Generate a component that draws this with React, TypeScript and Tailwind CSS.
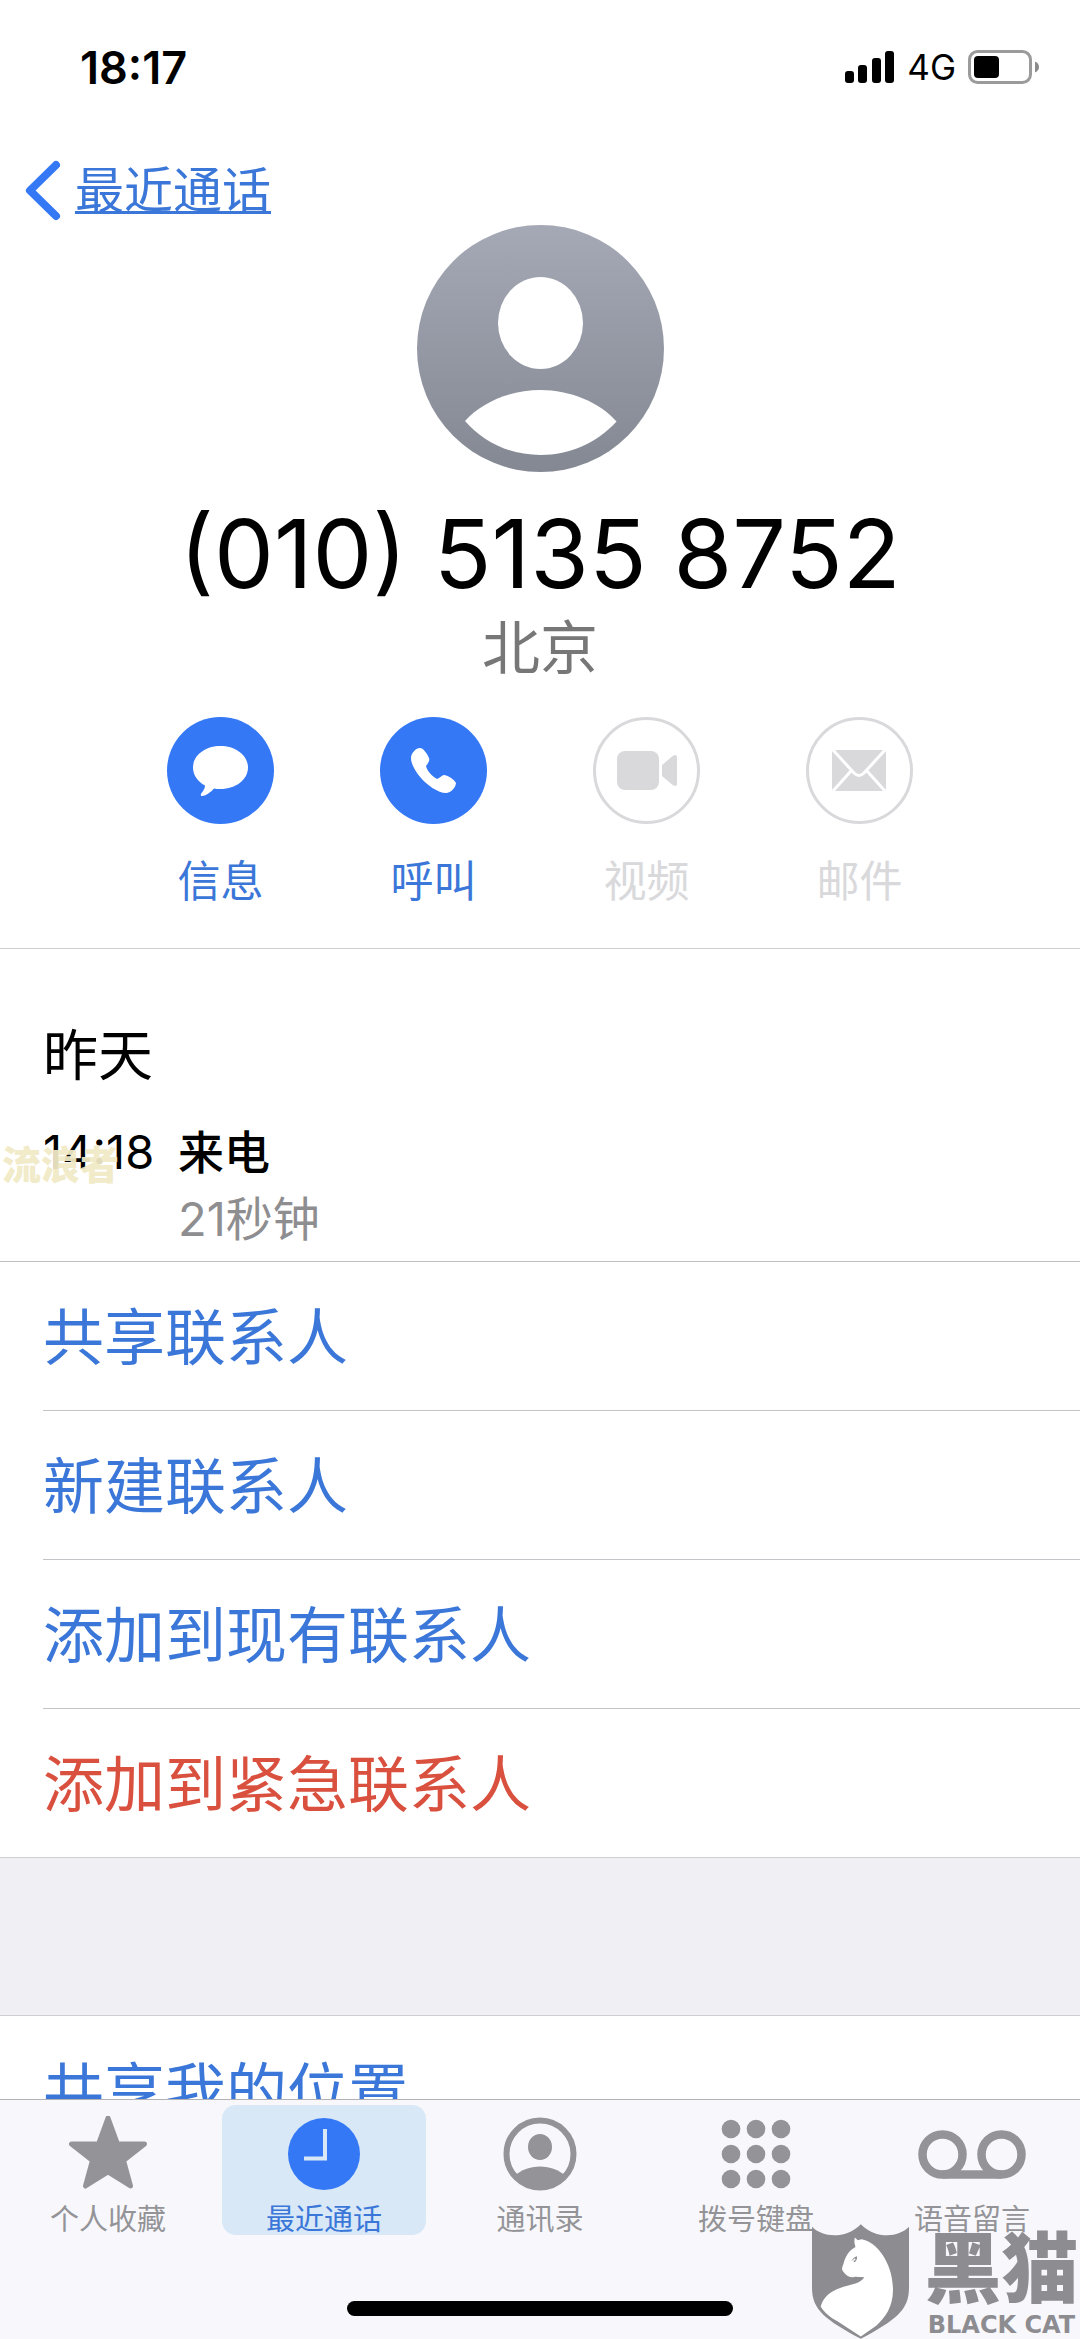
import type { ReactNode } from "react";

const SANS = "font-['Inter','Noto_Sans_CJK_SC',sans-serif]";

/* ── Status bar ── */

function StatusBar() {
  return (
    <header className="flex h-[134px] shrink-0 items-center justify-between pl-20 pr-10">
      <span className="text-[45px] font-semibold leading-none">18:17</span>
      <div className="flex items-center gap-3">
        <svg aria-hidden width="50" height="32" viewBox="0 0 50 32">
          <rect x="0" y="20" width="9" height="12" rx="3" />
          <rect x="13" y="14" width="9" height="18" rx="3" />
          <rect x="27" y="7" width="9" height="25" rx="3" />
          <rect x="40" y="0" width="9" height="32" rx="3" />
        </svg>
        <span className="text-[35px] leading-none">4G</span>
        <svg aria-hidden width="72" height="34" viewBox="0 0 72 34">
          <rect x="1.5" y="1.5" width="61" height="31" rx="8" fill="none" stroke="#9b9b9b" strokeWidth="3" />
          <rect x="6" y="6" width="25" height="22" rx="4" />
          <path d="M67 11.5c2.6 1 4 3.2 4 5.500s-1.4 4.5-4 5.500z" fill="#8a8a8a" />
        </svg>
      </div>
    </header>
  );
}

/* ── Contact card ── */

function Avatar() {
  return (
    <svg aria-hidden className="mt-1" width="247" height="247" viewBox="0 0 247 247">
      <defs>
        <linearGradient id="avatar" x1="0" y1="0" x2="0" y2="1">
          <stop offset="0" stopColor="#a5a9b5" />
          <stop offset="1" stopColor="#848893" />
        </linearGradient>
      </defs>
      <circle cx="123.5" cy="123.5" r="123.5" fill="url(#avatar)" />
      <ellipse cx="123.5" cy="98" rx="42.5" ry="46" fill="#fff" />
      <path d="M48 196C65 177 94 165 123.5 165S182 177 199.5 196.5C180 218 153 230 123.5 230S67 218 48 196Z" fill="#fff" />
    </svg>
  );
}

function Action({ label, disabled = false, children }: { label: string; disabled?: boolean; children: ReactNode }) {
  return (
    <button
      type="button"
      disabled={disabled}
      className={`flex w-[107px] flex-col items-center gap-8 ${disabled ? "text-[#d9d9dc]" : "text-[#3478f6]"}`}
    >
      <svg aria-hidden width="107" height="107" viewBox="0 0 107 107">
        {disabled ? (
          <circle cx="53.5" cy="53.5" r="52" fill="none" stroke="currentColor" strokeWidth="3" />
        ) : (
          <circle cx="53.5" cy="53.5" r="53.5" fill="currentColor" />
        )}
        {children}
      </svg>
      <span className={`text-[43px] leading-[50px] ${disabled ? "" : "text-[#3b77d8]"}`}>{label}</span>
    </button>
  );
}

function ContactCard() {
  return (
    <section className="flex flex-col items-center border-b border-[#cfcfd2] pb-[42px]">
      <Avatar />
      <h1 className="mt-[26px] whitespace-nowrap text-[95px] leading-[112px]">(010) 5135 8752</h1>
      <p className="mt-1 text-[58px] leading-[68px] text-[#777]">北京</p>
      <div className="mt-[35px] flex gap-[106px]">
        <Action label="信息">
          <path
            d="M53.5 29C69 29 81 38.5 81 50.5S69 72 53.5 72C51 72 49 71.8 47 71.4C44 75 39 78.5 35 79C33.5 79 33.5 77.5 34.5 76C36.5 73.5 38 71 38 68.5C30.5 64.5 26 58 26 50.5C26 38.5 38 29 53.5 29Z"
            fill="#fff"
          />
        </Action>
        <Action label="呼叫">
          <path
            d="M31 41C31 36 36 31 40 31C43 31 47 36 49 41C50 44 48 46 46 49C47 54 52 59 57 62C60 61 62 58 64 58C67 58 74 62 76 66C76 70 71 76 66 76C58 76 47 68 41 61C35 54 31 47 31 41Z"
            fill="#fff"
          />
        </Action>
        <Action label="视频" disabled>
          <rect x="24" y="34" width="42" height="39" rx="8" fill="currentColor" />
          <path d="M69 48L79 39.5Q84 36 84 41V66Q84 71 79 67.5L69 59Z" fill="currentColor" />
        </Action>
        <Action label="邮件" disabled>
          <rect x="26" y="33" width="54" height="41" rx="2" fill="currentColor" />
          <path d="M27 33L48 56Q53 61 58 56L79 33M45 54L27 74M61 54L79 74" fill="none" stroke="#fff" strokeWidth="3" />
        </Action>
      </div>
    </section>
  );
}

/* ── Call history ── */

function CallHistory() {
  return (
    <section className="relative border-b border-[#bfbfc2] pb-3 pl-[43px] pt-[74px]">
      <h2 className="text-[55px] leading-[64px]">昨天</h2>
      <div className="mt-[35px] grid grid-cols-[135px_1fr] text-[47px] leading-[60px]">
        <time>14:18</time>
        <div>
          <p className="text-[46px] font-medium">来电</p>
          <p className="mt-[7px] text-[#8e8e90]">21秒钟</p>
        </div>
      </div>
      <span aria-hidden className="absolute left-0.5 top-[196px] text-[39px] font-black leading-10 text-[#f1eac6]/95">
        流浪者
      </span>
    </section>
  );
}

const OPTIONS = [
  { label: "共享联系人" },
  { label: "新建联系人" },
  { label: "添加到现有联系人" },
  { label: "添加到紧急联系人", danger: true },
];

function OptionRow({ label, danger = false, last = false }: { label: string; danger?: boolean; last?: boolean }) {
  return (
    <li className={`ml-[43px] ${last ? "" : "border-b border-[#c4c4c8]"}`}>
      <button
        type="button"
        className={`block w-full pb-[35px] pt-[39px] text-left text-[61px] leading-[74px] ${danger ? "text-[#d9503f]" : "text-[#3b77d8]"}`}
      >
        {label}
      </button>
    </li>
  );
}

/* ── Tab bar ── */

function StarIcon() {
  return (
    <svg aria-hidden width="80" height="76" viewBox="0 0 80 76" fill="currentColor" stroke="currentColor" strokeWidth="5" strokeLinejoin="round">
      <path d="M40 2L49.5 28H76.5L55.5 44.5L62.5 70L40 56L17.5 70L24.5 44.500L3.5 28H30.500Z" />
    </svg>
  );
}

function ClockIcon() {
  return (
    <svg aria-hidden width="76" height="76" viewBox="0 0 76 76">
      <circle cx="38" cy="38" r="36" fill="#3478f6" />
      <path d="M39 13V42.5H18" fill="none" stroke="#d8e8f7" strokeWidth="4" />
    </svg>
  );
}

function ContactIcon() {
  return (
    <svg aria-hidden width="76" height="76" viewBox="0 0 76 76" fill="currentColor">
      <circle cx="38" cy="38" r="33.5" fill="none" stroke="currentColor" strokeWidth="6" />
      <ellipse cx="38" cy="31" rx="12" ry="13" />
      <path d="M12.5 60C19 54 28 50.5 38 50.5S57 54 63.5 60C57 69 48 74 38 74S19 69 12.5 60Z" />
    </svg>
  );
}

function KeypadIcon() {
  return (
    <svg aria-hidden width="76" height="76" viewBox="0 0 76 76" fill="currentColor">
      {[13, 38, 63].map((y) => [13, 38, 63].map((x) => <circle key={`${x}-${y}`} cx={x} cy={y} r="9.3" />))}
    </svg>
  );
}

function VoicemailIcon() {
  return (
    <svg aria-hidden width="108" height="76" viewBox="0 0 108 76" fill="none" stroke="currentColor" strokeWidth="8.5">
      <circle cx="24.5" cy="38.5" r="20" />
      <circle cx="83.5" cy="38.5" r="20" />
      <path d="M24.5 58.5H83.5" />
    </svg>
  );
}

const TABS = [
  { label: "个人收藏", icon: <StarIcon /> },
  { label: "最近通话", icon: <ClockIcon />, active: true },
  { label: "通讯录", icon: <ContactIcon /> },
  { label: "拨号键盘", icon: <KeypadIcon /> },
  { label: "语音留言", icon: <VoicemailIcon /> },
];

function TabBar() {
  return (
    <nav className="shrink-0 border-t border-[#b2b2b6] bg-[#f8f8fc] pb-[23px] pt-[5px]">
      <ul className="grid grid-cols-5">
        {TABS.map(({ label, icon, active }) => (
          <li key={label} className="px-1.5">
            <a
              href="#"
              aria-current={active ? "page" : undefined}
              className={`flex flex-col items-center rounded-[14px] pt-[11px] ${active ? "bg-[#d8e8f7] text-[#3b77d8]" : "text-[#949498]"}`}
            >
              {icon}
              <span className="mt-[13px] text-[29px] leading-[30px]">{label}</span>
            </a>
          </li>
        ))}
      </ul>
      <div className="mx-auto mt-[66px] h-[15px] w-[386px] rounded-full bg-black" />
    </nav>
  );
}

function BlackCatMark() {
  return (
    <div aria-hidden className="absolute bottom-0 right-0.5 flex items-end gap-4 text-[#8d8c91]">
      <svg width="97" height="115" viewBox="64 72 290 343">
        <path
          d="M64 80C98 114 166 116 210 72C254 116 320 114 354 80V262C354 330 314 358 210 415C106 358 64 330 64 262Z"
          fill="currentColor"
        />
        <path
          d="M192 112L201 120L212 117C258 124 304 188 306 262C308 318 284 350 256 376L210 408L140 362C118 350 102 338 90 318C98 288 124 268 164 258C196 250 214 244 220 231L192 229C178 235 166 226 156 212C150 204 158 196 160 184C166 164 178 148 194 140C190 130 190 120 192 112Z"
          fill="#fff"
        />
        <path d="M182 184C184 176 190 170 199 168C199 178 196 184 189 187C190 182 189 178 187 178Z" fill="currentColor" />
        <circle cx="191" cy="178" r="3" fill="#fff" />
      </svg>
      <div className="flex w-[153px] flex-col items-center gap-1.5">
        <span className="whitespace-nowrap text-[77px] font-black leading-[72px]">黑猫</span>
        <span className="whitespace-nowrap font-['DejaVu_Sans',sans-serif] text-[24px] font-bold leading-7">BLACK CAT</span>
      </div>
    </div>
  );
}

export default function App() {
  return (
    <div lang="zh-CN" className={`relative flex h-screen flex-col overflow-hidden bg-white text-black ${SANS}`}>
      <StatusBar />
      <div className="shrink-0 pl-6 pt-[26px]">
        <a href="#" className="inline-flex h-[61px] items-center gap-3.5 align-top text-[#3b77d8]">
          <svg aria-hidden width="37" height="61" viewBox="0 0 37 61" fill="none" stroke="#3478f6" strokeWidth="8" strokeLinecap="round" strokeLinejoin="round">
            <path d="M32 5L6 30.5L32 56" />
          </svg>
          <span className="text-[49px] leading-[60px] underline decoration-[3px] underline-offset-[3px] [text-decoration-skip-ink:none]">
            最近通话
          </span>
        </a>
      </div>
      <main className="min-h-0 flex-1 overflow-y-auto [scrollbar-width:none]">
        <ContactCard />
        <CallHistory />
        <ul>
          {OPTIONS.map((option, i) => (
            <OptionRow key={option.label} {...option} last={i === OPTIONS.length - 1} />
          ))}
        </ul>
        <div className="h-[159px] border-y border-[#cfcfd2] bg-[#efeff4]" />
        <ul>
          <OptionRow label="共享我的位置" last />
        </ul>
      </main>
      <TabBar />
      <BlackCatMark />
    </div>
  );
}
